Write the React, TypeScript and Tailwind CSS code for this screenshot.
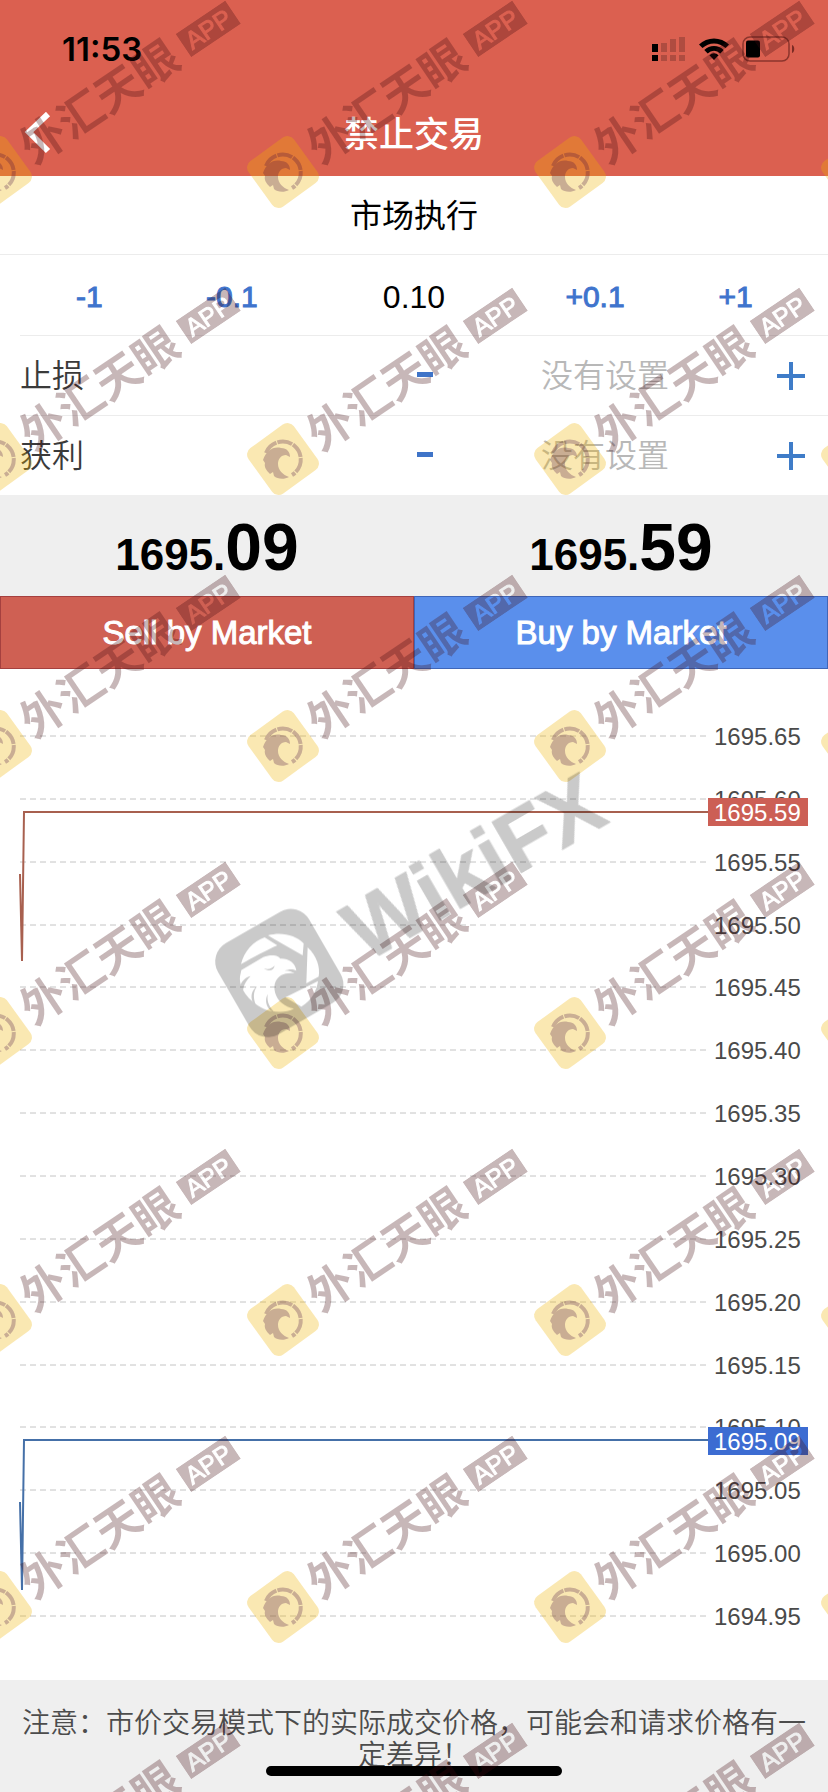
import { useState } from "react";

interface PriceLine {
  price: number;
  color: string;
  tag: string;
  points: string;
}

const CHART_WIDTH = 828;
const CHART_HEIGHT = 1011;
const TOP_PRICE = 1695.65;

const gridPrices = Array.from({ length: 15 }, (_, i) => TOP_PRICE - i * 0.05);

const priceY = (price: number) => Math.round(67 + (TOP_PRICE - price) * 1257);

const priceLines: PriceLine[] = [
  { price: 1695.59, color: "#a8604f", tag: "#cc5f55", points: "20,205 22,292 24,143 708,143" },
  { price: 1695.09, color: "#4570a8", tag: "#3c6cd2", points: "20,833 22,921 24,771 708,771" },
];

const StatusBar = () => (
  <div className="flex h-[90px] items-center justify-between pt-2 pr-8 pl-[62px]">
    <span className="font-['Inter'] text-[33px] leading-8 font-semibold text-black">11:53</span>
    <div className="flex items-center gap-3">
      <svg width="34" height="26" viewBox="0 0 34 26">
        <path d="M0 8h6v8H0zM0 19h6v6H0z" />
        <path
          d="M9 7h6v9H9zM9 19h6v6H9zM18 3h6v13h-6zM18 19h6v6h-6zM27 1h6v15h-6zM27 19h6v6h-6z"
          opacity="0.2"
        />
      </svg>
      <svg width="32" height="24" viewBox="0 0 32 24">
        <path d="M1 7.5a21.500 21.500 0 0 1 30 0l-3.500 3.600a16.500 16.500 0 0 0-23 0z" />
        <path d="M6.300 13a14 14 0 0 1 19.400 0l-3.400 3.400a9 9 0 0 0-12.600 0z" />
        <path d="M11.400 18.200a6.700 6.700 0 0 1 9.200 0L16 23z" />
      </svg>
      <svg width="54" height="26" viewBox="0 0 54 26">
        <rect x="1" y="1" width="46" height="24" rx="7" fill="none" stroke="#8c352c" strokeWidth="1.500" />
        <rect x="4" y="4.500" width="14" height="17" rx="2" />
        <path d="M50 9c3 1 3 7 0 8z" fill="#7c2b24" />
      </svg>
    </div>
  </div>
);

const NavBar = () => (
  <div className="grid h-[86px] grid-cols-[80px_1fr_80px] items-center">
    <button type="button" aria-label="返回" className="pl-6">
      <svg width="28" height="42" viewBox="0 0 28 42" fill="none" stroke="#fff" strokeWidth="6">
        <path d="M24 2L5 20l19 19" />
      </svg>
    </button>
    <h1 className="pt-1 text-center text-[35px] leading-10 font-medium text-white">禁止交易</h1>
  </div>
);

const StepButton = ({ label, onClick }: { label: string; onClick: () => void }) => (
  <button
    type="button"
    onClick={onClick}
    className="text-[30px] leading-8 text-[#3f74cd] [-webkit-text-stroke:1px_#3f74cd]"
  >
    {label}
  </button>
);

const VolumeRow = () => {
  const [volume, setVolume] = useState("0.10");

  const step = (by: number) => {
    setVolume(Math.max(0, Number(volume) + by).toFixed(2));
  };

  return (
    <div className="grid h-20 grid-cols-[143fr_143fr_222fr_141fr_141fr] items-center pt-1 pr-[22px] pl-[18px]">
      <StepButton label="-1" onClick={() => step(-1)} />
      <StepButton label="-0.1" onClick={() => step(-0.1)} />
      <input
        aria-label="手数"
        value={volume}
        onChange={(e) => setVolume(e.target.value)}
        className="w-full bg-transparent text-center text-[32px] leading-8 text-black outline-none"
      />
      <StepButton label="+0.1" onClick={() => step(0.1)} />
      <StepButton label="+1" onClick={() => step(1)} />
    </div>
  );
};

const LevelRow = ({ id, label }: { id: string; label: string }) => (
  <div className="ml-5 grid h-20 grid-cols-2 items-center border-t border-[#ececec] pr-5">
    <label htmlFor={id} className="text-[32px] leading-10 font-[350] text-[#3a3a3a]">
      {label}
    </label>
    <div className="flex items-center px-[3px]">
      <button type="button" aria-label={`${label} -`}>
        <svg width="16" height="28" viewBox="0 0 16 28">
          <path d="M0 10h16v5H0z" fill="#3f74c8" />
        </svg>
      </button>
      <input
        id={id}
        placeholder="没有设置"
        className="w-full min-w-0 flex-1 bg-transparent text-center text-[32px] leading-10 font-[350] outline-none placeholder:text-[#b8b8b8]"
      />
      <button type="button" aria-label={`${label} +`}>
        <svg width="28" height="28" viewBox="0 0 28 28">
          <path d="M12 0h4v12h12v4H16v12h-4V16H0v-4h12z" fill="#3f7cc8" />
        </svg>
      </button>
    </div>
  </div>
);

const Quote = ({ whole, cents }: { whole: string; cents: string }) => (
  <p className="text-center text-[44px] leading-[104px] font-bold text-black">
    {whole}
    <span className="text-[66px]">{cents}</span>
  </p>
);

const Chart = () => (
  <svg
    viewBox={`0 0 ${CHART_WIDTH} ${CHART_HEIGHT}`}
    className="h-auto w-full font-['Liberation_Sans',sans-serif] text-[24px]"
  >
    {gridPrices.map((price) => (
      <g key={price}>
        <line
          x1="20"
          x2="706"
          y1={priceY(price)}
          y2={priceY(price)}
          stroke="#c4c4c4"
          strokeDasharray="6 4"
        />
        <text x="714" y={priceY(price) + 9} fill="#4a4a4a">
          {price.toFixed(2)}
        </text>
      </g>
    ))}
    {priceLines.map((line) => (
      <g key={line.price}>
        <polyline points={line.points} fill="none" stroke={line.color} strokeWidth="2" />
        <rect x="708" y={priceY(line.price) - 13} width="100" height="28" fill={line.tag} />
        <text x="714" y={priceY(line.price) + 10} fill="#fff">
          {line.price.toFixed(2)}
        </text>
      </g>
    ))}
  </svg>
);

const STAMP_STEP = 287;

const Watermark = () => (
  <svg aria-hidden="true" className="pointer-events-none absolute inset-0 h-full w-full">
    <defs>
      <mask id="app-cut" maskUnits="userSpaceOnUse" x="220" y="-20" width="80" height="40">
        <rect x="226" y="-14" width="60" height="28" fill="#fff" />
        <text
          x="231"
          y="9"
          stroke="#000"
          strokeWidth="1"
          className="font-['Liberation_Sans',sans-serif] text-[25px]"
        >
          APP
        </text>
      </mask>
      <g id="stamp">
        <g transform="rotate(-36)">
          <rect x="-28" y="-28" width="56" height="56" rx="8" fill="#f0b200" opacity="0.3" />
        </g>
        <g transform="rotate(-34)" fill="#410a0f" opacity="0.29">
          <text x="35" y="16" className="text-[45px] font-bold">
            外汇天眼
          </text>
          <rect x="226" y="-14" width="60" height="28" mask="url(#app-cut)" />
        </g>
        <g opacity="0.26" fill="#410a3f">
          <path
            d="M-17-6A18 18 0 1 1 9 16"
            fill="none"
            stroke="#410a3f"
            strokeWidth="4"
            strokeDasharray="15 1"
          />
          <path d="M-20 1C-17-8-10-13-2-11C4-11 7-7 7-2L3-4C-2-4-5 0-5 5C-5 11 0 16 6 18C1 21-6 20-9 17L-10 13L-13 15C-17 11-19 8-18 4z" />
        </g>
      </g>
    </defs>

    {[0, 1, 2, 3, 4, 5, 6].map((row) =>
      [0, 1, 2, 3].map((col) => (
        <use key={`${row}-${col}`} href="#stamp" x={col * STAMP_STEP - 4} y={172 + row * STAMP_STEP} />
      ))
    )}

    <g opacity="0.21">
      <g transform="translate(200 760) scale(0.3333)">
        <mask id="eagle-cut" maskUnits="userSpaceOnUse" x="0" y="400" width="480" height="480">
          <rect x="0" y="400" width="480" height="480" fill="#fff" />
          <path d="M123 612C132 575 160 543 194 532L232 556C200 570 160 592 123 612z" />
          <path d="M204 526C245 514 288 526 311 550L308 586L224 538z" />
          <path d="M323 562C350 588 361 620 356 650L319 670z" />
          <path d="M354 663L256 712L304 740C335 720 350 692 354 663z" />
          <path d="M124 630L190 591C214 582 238 586 240 596C262 594 286 606 289 632C276 625 266 628 254 632C268 632 276 636 284 640C258 636 236 644 227 664C218 684 226 712 244 728C256 738 268 744 282 746C258 760 216 758 190 746C146 724 116 684 120 650z" />
          <g fill="#fff">
            <path d="M192 625C206 630 214 626 224 617C222 632 206 636 192 625z" />
            <path d="M152 648C136 664 129 678 129 700L121 676C126 662 136 652 152 648z" />
            <path d="M172 678C158 696 160 716 168 736L158 726C150 706 156 690 172 678z" />
            <path d="M203 702C200 728 210 744 226 758L212 752C198 738 194 720 203 702z" />
          </g>
        </mask>
        <g mask="url(#eagle-cut)">
          <rect x="80" y="481" width="316" height="316" rx="64" transform="rotate(-30 238 639)" />
        </g>
      </g>
      <text
        transform="translate(366 963) rotate(-30)"
        stroke="#000"
        strokeWidth="1"
        strokeLinejoin="round"
        className="font-['Liberation_Sans',sans-serif] text-[85px] font-bold"
      >
        WikiFX
      </text>
    </g>
  </svg>
);

const App = () => {
  return (
    <div className="relative w-full overflow-hidden bg-white font-['Liberation_Sans','Noto_Sans_CJK_SC',sans-serif]">
      <header className="bg-[#db6050]">
        <StatusBar />
        <NavBar />
      </header>

      <main>
        <p className="h-[79px] border-b border-[#ececec] text-center text-[32px] leading-[80px] text-black">
          市场执行
        </p>
        <VolumeRow />
        <LevelRow id="stop-loss" label="止损" />
        <LevelRow id="take-profit" label="获利" />

        <div className="grid h-[101px] grid-cols-2 bg-[#efefef]">
          <Quote whole="1695." cents="09" />
          <Quote whole="1695." cents="59" />
        </div>
        <div className="grid grid-cols-2 text-[33px] text-white [-webkit-text-stroke:1px_#fff]">
          <button type="button" className="h-[73px] border border-[#a5403f] bg-[#cf6053]">
            Sell by Market
          </button>
          <button type="button" className="h-[73px] border border-[#3f66b8] bg-[#5a8fec]">
            Buy by Market
          </button>
        </div>

        <Chart />
      </main>

      <footer className="relative h-28 bg-[#efefef] px-5 pt-7 text-center text-[28px] leading-8 font-[350] text-[#4c4c4c]">
        注意：市价交易模式下的实际成交价格，可能会和请求价格有一定差异！
        <div className="absolute bottom-4 left-1/2 h-[10px] w-[296px] -translate-x-1/2 rounded-full bg-black" />
      </footer>

      <Watermark />
    </div>
  );
};

export default App;
